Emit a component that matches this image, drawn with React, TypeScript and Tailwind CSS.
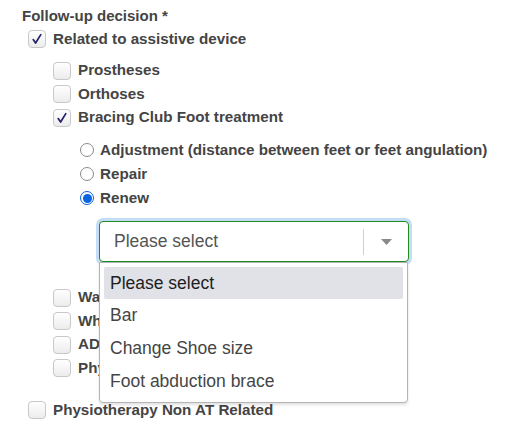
function Check({ checked }: { checked?: boolean }) {
  return (
    <span className="w-[18px] h-[18px] shrink-0 rounded-[4px] border border-[#c8c8c8] bg-gradient-to-b from-white to-[#ececec] flex items-center justify-center">
      {checked && (
        <svg width="12" height="12" viewBox="0 0 12 12">
          <path d="M2.2 6.6 L4.6 10 L9.8 1.6" fill="none" stroke="#23206b" strokeWidth="1.7" strokeLinecap="round" strokeLinejoin="round" />
        </svg>
      )}
    </span>
  );
}

function Radio({ checked }: { checked?: boolean }) {
  return checked ? (
    <span className="w-[14px] h-[14px] shrink-0 rounded-full border border-[#0a63e0] bg-white flex items-center justify-center">
      <span className="w-[9px] h-[9px] rounded-full bg-[#0a63e0]" />
    </span>
  ) : (
    <span className="w-[14px] h-[14px] shrink-0 rounded-full border border-[#8a8a8a] bg-white" />
  );
}

function CheckRow({ label, checked }: { label: string; checked?: boolean }) {
  return (
    <div className="flex items-center gap-[7px] h-[23.5px]">
      <Check checked={checked} />
      <span>{label}</span>
    </div>
  );
}

function RadioRow({ label, checked }: { label: string; checked?: boolean }) {
  return (
    <div className="flex items-center gap-[6px] h-[24px]">
      <Radio checked={checked} />
      <span>{label}</span>
    </div>
  );
}

const OPTIONS = ['Please select', 'Bar', 'Change Shoe size', 'Foot abduction brace'];

export default function App() {
  return (
    <div className="w-[518px] h-[425px] bg-white overflow-hidden pt-[6px] pl-[22px] font-['Liberation_Sans',Arial,sans-serif] text-[15.2px] font-bold text-[#444]">
      <div className="h-[20px] leading-[20px] text-[15px]">Follow-up decision *</div>

      <div className="pl-[6px] mt-[1px] flex items-center gap-[7px] h-[24px]">
        <Check checked />
        <span>Related to assistive device</span>
      </div>

      <div className="pl-[31px] mt-[8px]">
        <CheckRow label="Prostheses" />
        <CheckRow label="Orthoses" />
        <CheckRow label="Bracing Club Foot treatment" checked />

        <div className="pl-[27px] mt-[8.5px]">
          <RadioRow label="Adjustment (distance between feet or feet angulation)" />
          <RadioRow label="Repair" />
          <RadioRow label="Renew" checked />

          <div className="relative mt-[11px] ml-[19px] w-[310px] z-10">
            <div className="h-[41px] rounded-[4px] border border-[#1e8c1e] shadow-[0_0_0_3px_#c4dcf6] bg-white flex items-center font-normal">
              <span className="flex-1 pl-[14px] text-[17.5px] text-[#555]">Please select</span>
              <span className="w-px h-[26px] bg-[#cfcfcf]" />
              <span className="w-[44px] flex justify-center">
                <svg width="11" height="6" viewBox="0 0 11 6">
                  <path d="M0 0 H11 L5.5 6 Z" fill="#8a8a8a" />
                </svg>
              </span>
            </div>
            <div className="absolute left-0 top-full w-[309px] bg-white border border-[#b4b4b4] rounded-b-[4px] shadow-[0_2px_3px_rgba(0,0,0,0.12)] px-[4px] pt-[4px] pb-[4px] font-normal text-[17.5px]">
              {OPTIONS.map((o, i) => (
                <div
                  key={o}
                  className={`flex items-center pl-[6px] rounded-[2px] ${i === 0 ? 'bg-[#e1e1e8] text-[#1e1e1e] h-[32px]' : 'text-[#454545] h-[33px]'}`}
                >
                  {o}
                </div>
              ))}
            </div>
          </div>
        </div>

        <div className="mt-[24px]">
          <CheckRow label="Walking aids" />
          <CheckRow label="Wheelchair" />
          <CheckRow label="ADL devices" />
          <CheckRow label="Physiotherapy AT Related" />
        </div>
      </div>

      <div className="pl-[6px] mt-[18px] flex items-center gap-[7px] h-[24px]">
        <Check />
        <span>Physiotherapy Non AT Related</span>
      </div>
    </div>
  );
}
